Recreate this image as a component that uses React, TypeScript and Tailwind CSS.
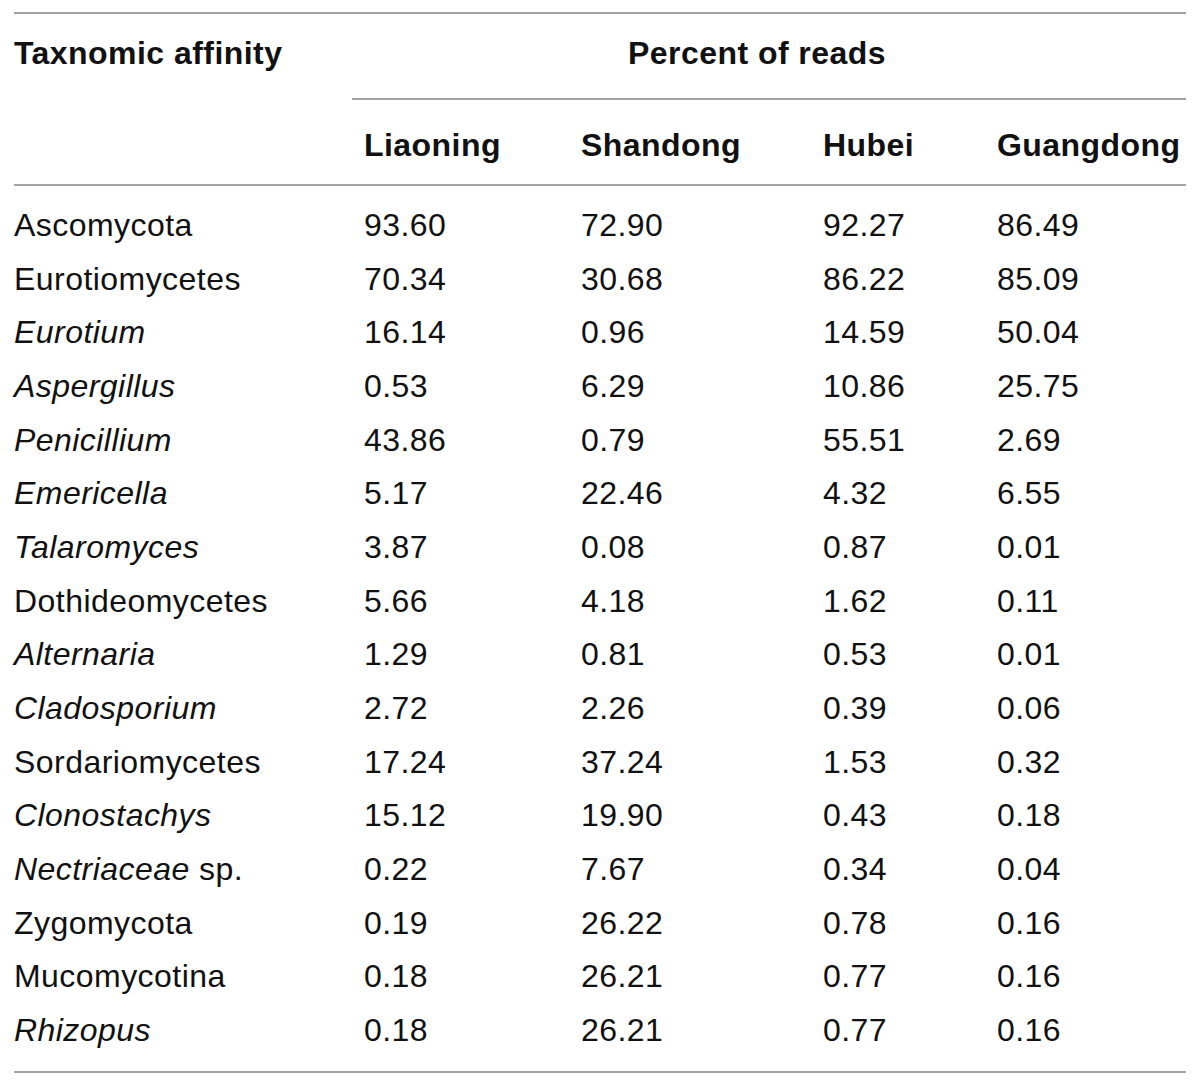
type Row = {
  name: string
  italic?: boolean
  suffix?: string
  values: string[]
}

const rows: Row[] = [
  { name: "Ascomycota", values: ["93.60", "72.90", "92.27", "86.49"] },
  { name: "Eurotiomycetes", values: ["70.34", "30.68", "86.22", "85.09"] },
  { name: "Eurotium", italic: true, values: ["16.14", "0.96", "14.59", "50.04"] },
  { name: "Aspergillus", italic: true, values: ["0.53", "6.29", "10.86", "25.75"] },
  { name: "Penicillium", italic: true, values: ["43.86", "0.79", "55.51", "2.69"] },
  { name: "Emericella", italic: true, values: ["5.17", "22.46", "4.32", "6.55"] },
  { name: "Talaromyces", italic: true, values: ["3.87", "0.08", "0.87", "0.01"] },
  { name: "Dothideomycetes", values: ["5.66", "4.18", "1.62", "0.11"] },
  { name: "Alternaria", italic: true, values: ["1.29", "0.81", "0.53", "0.01"] },
  { name: "Cladosporium", italic: true, values: ["2.72", "2.26", "0.39", "0.06"] },
  { name: "Sordariomycetes", values: ["17.24", "37.24", "1.53", "0.32"] },
  { name: "Clonostachys", italic: true, values: ["15.12", "19.90", "0.43", "0.18"] },
  { name: "Nectriaceae", italic: true, suffix: " sp.", values: ["0.22", "7.67", "0.34", "0.04"] },
  { name: "Zygomycota", values: ["0.19", "26.22", "0.78", "0.16"] },
  { name: "Mucomycotina", values: ["0.18", "26.21", "0.77", "0.16"] },
  { name: "Rhizopus", italic: true, values: ["0.18", "26.21", "0.77", "0.16"] },
]

const regions = ["Liaoning", "Shandong", "Hubei", "Guangdong"]

const cols = "grid grid-cols-[338px_217px_242px_174px_1fr]"

export default function App() {
  return (
    <div className="w-[1200px] h-[1085px] bg-white px-[14px] pt-[12px] text-[32px] tracking-[0.45px] text-[#111] font-['Liberation_Sans',Arial,sans-serif]">
      <div className="border-t-2 border-[#a3a3a3]">
        {/* header */}
        <div className={cols}>
          <div className="row-span-2 pt-[19px] font-bold leading-[40px]">Taxnomic affinity</div>
          <div className="col-span-4 h-[86px] pt-[19px] pl-[276px] font-bold leading-[40px] border-b-2 border-[#a3a3a3]">
            Percent of reads
          </div>
          {regions.map((r) => (
            <div key={r} className="pl-[12px] pt-[25px] h-[84px] font-bold leading-[40px] whitespace-nowrap">
              {r}
            </div>
          ))}
        </div>

        <div className="border-t-2 border-[#a3a3a3] pt-[13px] pb-[13px] border-b-2">
          {rows.map((row) => (
            <div key={row.name} className={`${cols} h-[53.67px] leading-[53.67px]`}>
              <div>
                <span className={row.italic ? "italic" : ""}>{row.name}</span>
                {row.suffix}
              </div>
              {row.values.map((v, i) => (
                <div key={i} className="pl-[12px]">
                  {v}
                </div>
              ))}
            </div>
          ))}
        </div>
      </div>
    </div>
  )
}
